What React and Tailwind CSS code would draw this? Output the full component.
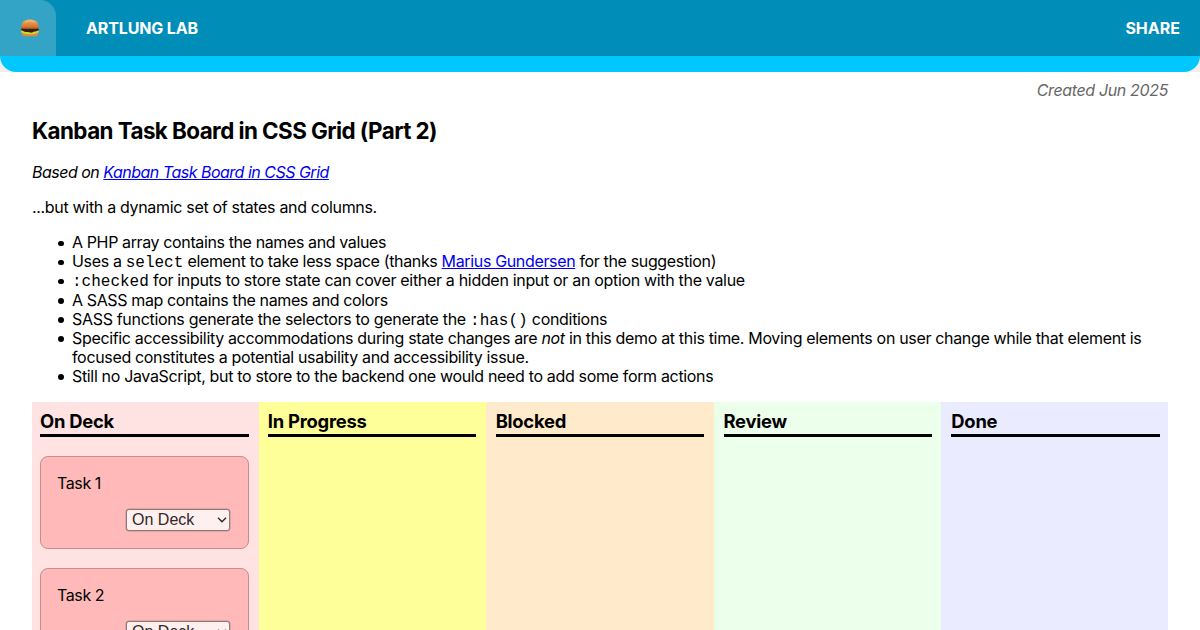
const columns = ["On Deck", "In Progress", "Blocked", "Review", "Done"];
const tasks = ["Task 1", "Task 2"];

function Burger() {
  return (
    <svg viewBox="0 0 20 20" className="h-5 w-5" aria-hidden="true">
      <defs>
        <linearGradient id="bun" x1="0" y1="0" x2="0" y2="1">
          <stop offset="0" stopColor="#f3ad62" />
          <stop offset="1" stopColor="#cf732f" />
        </linearGradient>
      </defs>
      <path d="M1.7 13.500h16.600v1.900c0 2-1.700 2.900-3.800 2.900h-9c-2.100 0-3.800-.9-3.800-2.900z" fill="#d98a3f" />
      <rect x="1" y="8.500" width="18" height="3" rx="1.500" fill="#c8622f" />
      <path d="M1 11.200q1-1 2.500-.5h13q1.500-.5 2.500.5c.4 1.500-.8 2.400-1.800 2.200l-1 1.300H3.500l-1-1.300C1.300 13.500.7 12.800 1 11.200z" fill="#33200e" />
      <path d="M1 12.300c1 .2 1.500.4 2.500.9 1.500.8 3 .7 4.500.9 1.700.2 2.800 1.100 4.400.4 1.200-.6 1.700-1 3.100-1l3.500-1.200c.3 1.700-1.200 2.800-2.400 2.900-2.600 1.300-10.700 1.300-13.200 0C2 15.300.7 14.300 1 12.300z" fill="#ccd92e" />
      <path d="M1.500 7.900C1.600 3.700 4.700 1.500 10 1.500s8.400 2.200 8.500 6.400c0 1-.9 1.500-2 1.500h-13c-1.100 0-2-.5-2-1.500z" fill="url(#bun)" />
      <path d="M5 4.400q2-1.500 5-1.500t5 1.500" fill="none" stroke="#f8cc93" strokeWidth=".7" />
    </svg>
  );
}

function TaskCard({ name }) {
  return (
    <div className="flex h-[92.800px] flex-col rounded-lg border border-[#c88c8c] bg-[#ffb9b9] p-4">
      <p className="h-[19px] pt-px leading-[19px] tracking-[-0.4px]">{name}</p>
      <div className="mt-[17px] flex justify-end pr-[1.600px]">
        <div className="grid w-[104px] items-center">
          <select className="col-start-1 row-start-1 h-[22px] w-full appearance-none rounded-[3px] border border-[#927878] bg-[#fff0f0] pl-[5px] font-['Liberation_Sans',sans-serif] text-base leading-none text-[#332626] shadow-[0_0_0_0.5px_#b99090]">
            {columns.map((c) => (
              <option key={c}>{c}</option>
            ))}
          </select>
          <svg viewBox="0 0 10 6" className="pointer-events-none col-start-1 row-start-1 mr-[3px] h-[6px] w-[10px] justify-self-end" fill="none" stroke="#332626" strokeWidth="1.400">
            <path d="M1 .8l4 4 4-4" />
          </svg>
        </div>
      </div>
    </div>
  );
}

function Item({ children }) {
  return (
    <li className="before:mr-[8.500px] before:-ml-[14px] before:inline-block before:h-[5.500px] before:w-[5.500px] before:rounded-full before:bg-black before:align-[2px] before:content-['']">
      {children}
    </li>
  );
}

const code = "font-['Liberation_Mono',monospace] text-base leading-none tracking-normal";
const link = "text-[#0000ee] underline";

export default function App() {
  return (
    <div className="h-[630px] overflow-hidden bg-white font-['Inter',sans-serif] text-base leading-[19.100px] text-black">
      <div className="bg-[#eeeeee]">
        <header className="overflow-hidden rounded-b-2xl border-b-[16px] border-[#00c8ff] bg-[#00c8ff]">
          <div className="flex h-14 items-center bg-[#008db8] pr-5 font-bold text-white">
            <a className="flex h-14 w-14 items-center justify-center rounded-tr-2xl bg-[#33a4c6] pl-1">
              <Burger />
            </a>
            <span className="ml-[30px] pt-[2px] tracking-[-0.13px]">ARTLUNG LAB</span>
            <span className="ml-auto pt-[2px] tracking-[0px]">SHARE</span>
          </div>
        </header>
      </div>
      <main className="px-8 pt-[9px]">
        <p className="text-right tracking-[-0.35px] text-[#666666] italic">Created Jun 2025</p>
        <h1 className="mt-[17px] text-[22.400px] leading-[27px] font-bold tracking-[-0.56px]">Kanban Task Board in CSS Grid (Part 2)</h1>
        <p className="mt-[19px] tracking-[-0.5px] italic">
          Based on <a className={link}>Kanban Task Board in CSS Grid</a>
        </p>
        <p className="mt-4 tracking-[-0.32px]">...but with a dynamic set of states and columns.</p>
        <ul className="mt-4 list-none pl-10 tracking-[-0.335px]">
          <Item><span className="tracking-[-0.38px]">A PHP array contains the names and values</span></Item>
          <Item>
            <span className="tracking-[-0.35px]">Uses a <code className={code}>select</code> element to take less space (thanks <a className={link}>Marius Gundersen</a> for the suggestion)</span>
          </Item>
          <Item><span className="tracking-[-0.32px]"><code className={code}>:checked</code> for inputs to store state can cover either a hidden input or an option with the value</span></Item>
          <Item><span className="tracking-[-0.37px]">A SASS map contains the names and colors</span></Item>
          <Item><span className="tracking-[-0.315px]">SASS functions generate the selectors to generate the <code className={code}>:has()</code> conditions</span></Item>
          <Item>
            Specific accessibility accommodations during state changes are <em>not</em> in this demo at this time. Moving elements on user change while that element is
            focused constitutes a potential usability and accessibility issue.
          </Item>
          <Item>Still no JavaScript, but to store to the backend one would need to add some form actions</Item>
        </ul>
        <div className="mt-4 grid h-[400px] grid-cols-5 gap-x-[19.200px] bg-[linear-gradient(90deg,#ffe2e2_20%,#ffff99_20%_40%,#ffebcc_40%_60%,#ebffeb_60%_80%,#ebebff_80%)] p-2">
          {columns.map((c, i) => (
            <section key={c} className="flex flex-col gap-[19.200px]">
              <h2 className="h-[27px] border-b-[3px] border-black text-[18.400px] leading-[23px] font-bold tracking-[-0.25px]">{c}</h2>
              {i === 0 && tasks.map((t) => <TaskCard key={t} name={t} />)}
            </section>
          ))}
        </div>
      </main>
    </div>
  );
}
